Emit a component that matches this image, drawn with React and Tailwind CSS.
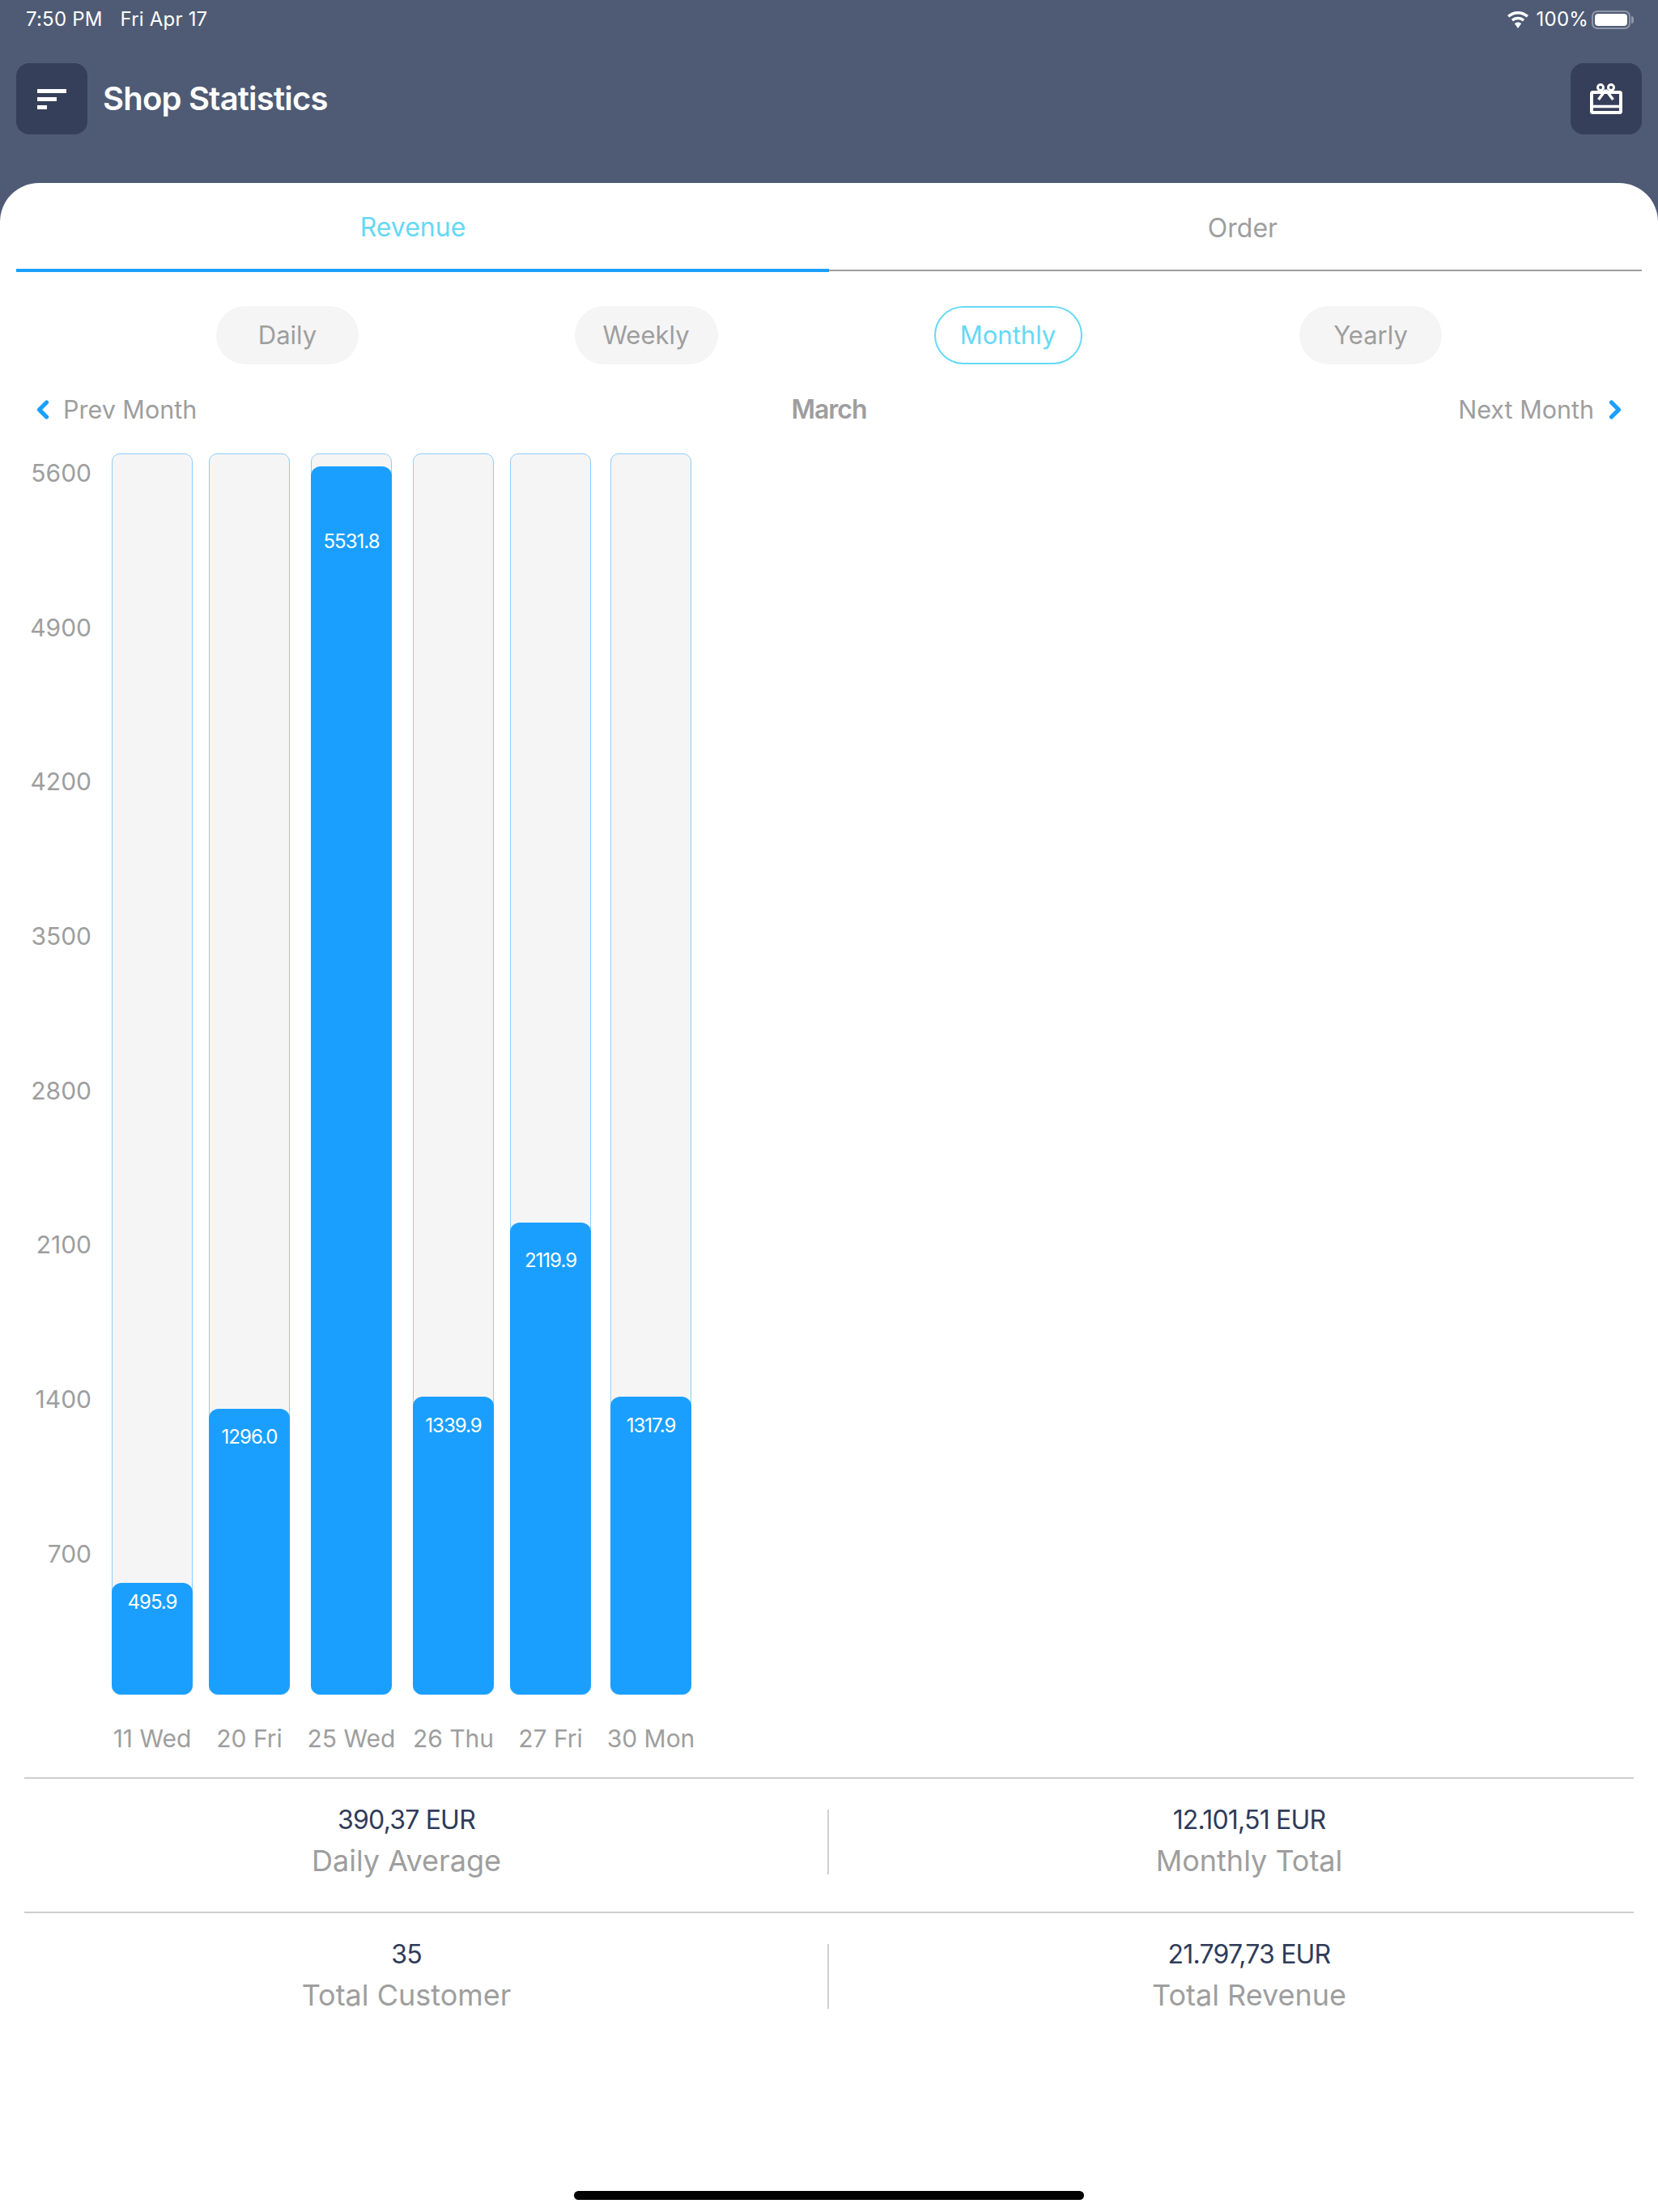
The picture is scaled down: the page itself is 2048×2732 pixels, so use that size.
import { ChevronLeft, ChevronRight } from 'lucide-react'

const PERIODS = [
  { label: 'Daily', width: 'w-[176px]', nudge: '' },
  { label: 'Weekly', width: 'w-[177px]', nudge: 'mr-[6px]' },
  { label: 'Monthly', width: 'w-[183px]', nudge: 'mr-[4px]', active: true },
  { label: 'Yearly', width: 'w-[176px]', nudge: '' },
]

const AXIS = ['5600', '4900', '4200', '3500', '2800', '2100', '1400', '700']

const BARS = [
  { day: '11 Wed', value: '495.9', height: 'h-[138px]', top: 'pt-[9px]', gap: '' },
  { day: '20 Fri', value: '1296.0', height: 'h-[353px]', top: 'pt-[20px]', gap: 'ml-[20px]' },
  { day: '25 Wed', value: '5531.8', height: 'h-[1517px]', top: 'pt-[78px]', gap: 'ml-[26px]' },
  { day: '26 Thu', value: '1339.9', height: 'h-[368px]', top: 'pt-[21px]', gap: 'ml-[26px]' },
  { day: '27 Fri', value: '2119.9', height: 'h-[583px]', top: 'pt-[32px]', gap: 'ml-[20px]' },
  { day: '30 Mon', value: '1317.9', height: 'h-[368px]', top: 'pt-[21px]', gap: 'ml-[24px]' },
]

const STATS = [
  [
    { value: '390,37 EUR', label: 'Daily Average' },
    { value: '12.101,51 EUR', label: 'Monthly Total' },
  ],
  [
    { value: '35', label: 'Total Customer' },
    { value: '21.797,73 EUR', label: 'Total Revenue' },
  ],
]

function GiftIcon() {
  return (
    <svg width="40" height="38" viewBox="0 0 40 38" fill="none" stroke="white">
      <rect x="2" y="11" width="36" height="25" rx="1.500" strokeWidth="4" />
      <path d="M2 28.500h36" strokeWidth="3.500" />
      <circle cx="13" cy="5" r="3.500" strokeWidth="3" />
      <circle cx="26" cy="5" r="3.500" strokeWidth="3" />
      <path d="M19.500 8l-9 12M19.500 8l9 12" strokeWidth="3.500" />
    </svg>
  )
}

function StatusBar() {
  return (
    <div className="flex h-[48px] shrink-0 items-center justify-between pl-[32px] pr-[30px] text-[24px] tracking-[0.2px] text-white">
      <div className="flex gap-[22px]">
        <span>7:50 PM</span>
        <span>Fri Apr 17</span>
      </div>
      <div className="flex items-center">
        <svg width="26" height="21" viewBox="0 0 26 21" fill="white" className="mr-[10px]">
          <path d="M13 0c5 0 9.500 1.900 13 5.100l-2.300 2.500C20.900 5 17.100 3.400 13 3.400S5.100 5 2.300 7.600L0 5.100C3.500 1.900 8 0 13 0z" />
          <path d="M13 6.800c3.100 0 5.900 1.200 8.100 3.100l-2.300 2.500c-1.500-1.400-3.600-2.200-5.800-2.200s-4.300.8-5.800 2.200l-2.300-2.500c2.200-1.900 5-3.100 8.100-3.100z" />
          <path d="M13 13.500c-1.600 0-3.100.6-4.200 1.600L13 21l4.200-5.900c-1.100-1-2.600-1.600-4.200-1.600z" />
        </svg>
        <span>100%</span>
        <div className="ml-[4px] flex items-center">
          <div className="flex h-[23px] w-[48px] rounded-[7px] border-2 border-[#8f97a8] p-[2px]">
            <div className="flex-1 rounded-[4px] bg-white" />
          </div>
          <div className="ml-[1px] h-[9px] w-[3px] rounded-r-full bg-[#8f97a8]" />
        </div>
      </div>
    </div>
  )
}

export default function App() {
  return (
    <div className="flex h-[2732px] w-[2048px] flex-col overflow-hidden bg-[#4f5b75] font-['Inter',sans-serif]">
      <StatusBar />
      <div className="mt-[30px] flex h-[88px] shrink-0 items-center justify-between px-[20px]">
        <div className="flex items-center gap-[19px]">
          <button className="flex h-[88px] w-[88px] flex-col items-start justify-center gap-[5px] rounded-[16px] bg-[#363f59] pl-[26px]">
            <span className="h-[5px] w-[36px] bg-white" />
            <span className="h-[5px] w-[24px] bg-white" />
            <span className="h-[5px] w-[12px] bg-white" />
          </button>
          <h1 className="text-[40px] font-semibold tracking-[-0.8px] text-white">Shop Statistics</h1>
        </div>
        <button className="flex h-[88px] w-[88px] items-center justify-center rounded-[16px] bg-[#363f59]">
          <GiftIcon />
        </button>
      </div>

      <div className="mt-[60px] flex-1 rounded-t-[48px] bg-white">
        <div className="flex px-[20px]">
          <div className="flex h-[110px] w-[1004px] items-center justify-center border-b-4 border-[#1a9fff] pr-[24px] pt-[4px] text-[32px] text-[#66d9f5]">Revenue</div>
          <div className="flex h-[109px] w-[1004px] items-center justify-center border-b-2 border-[#9e9e9e] pl-[18px] pt-[4px] text-[32px] text-[#9e9e9e]">Order</div>
        </div>

        <div className="mx-auto mt-[42px] grid w-[1784px] grid-cols-4">
          {PERIODS.map(p => (
            <div key={p.label} className="flex justify-center">
              <div className={`flex h-[72px] items-center justify-center rounded-full text-[31px] ${p.width} ${p.nudge} ${p.active ? 'border-2 border-[#66d9f5] text-[#66d9f5]' : 'bg-[#f5f5f5] text-[#9e9e9e]'}`}>
                {p.label}
              </div>
            </div>
          ))}
        </div>

        <div className="mt-[36px] flex h-[40px] items-center justify-between px-[35px] text-[30.5px] text-[#9e9e9e]">
          <div className="flex w-[400px] items-center gap-[7px]">
            <ChevronLeft size={36} strokeWidth={3.5} className="text-[#1a9fff]" />
            <span>Prev Month</span>
          </div>
          <span className="text-[32px] font-semibold tracking-[-1px]">March</span>
          <div className="flex w-[400px] items-center justify-end gap-[8px]">
            <span>Next Month</span>
            <ChevronRight size={36} strokeWidth={3.5} className="text-[#1a9fff]" />
          </div>
        </div>

        <div className="mt-[34px] flex">
          <div className="flex h-[1533px] w-[113px] flex-col items-end pt-[4px] text-[30px] leading-[40px] text-[#9e9e9e]">
            {AXIS.map(v => (
              <div key={v} className="h-[190.7px] shrink-0">{v}</div>
            ))}
          </div>
          <div className="ml-[25px] flex">
            {BARS.map(b => (
              <div key={b.day} className={`flex w-[100px] flex-col items-center ${b.gap}`}>
                <div className="flex h-[1533px] w-full flex-col justify-end rounded-[10px] border border-[#90cdf9] bg-[#f5f5f5]">
                  <div className={`-mx-px -mb-px rounded-[12px] bg-[#1a9fff] text-center text-[24px] leading-[30px] tracking-[-1px] text-white ${b.height} ${b.top}`}>
                    {b.value}
                  </div>
                </div>
                <div className="mt-[34px] whitespace-nowrap text-[30px] leading-[40px] text-[#9e9e9e]">{b.day}</div>
              </div>
            ))}
          </div>
        </div>

        <div className="mx-[30px] mt-[28px]">
          {STATS.map(row => (
            <div key={row[0].label} className="flex h-[166px] items-center border-t-2 border-[#cfcfcf] pb-[8px]">
              {row.map((s, i) => (
                <div key={s.label} className={`flex h-[80px] w-1/2 flex-col items-center justify-center pb-[4px] ${i === 0 ? 'border-r-2 border-[#cfcfcf] pr-[48px]' : 'pl-[44px]'}`}>
                  <div className="text-[32px] leading-[44px] tracking-[-0.8px] text-[#2f3b59]">{s.value}</div>
                  <div className="mt-[6px] text-[36px] leading-[44px] text-[#9e9e9e]">{s.label}</div>
                </div>
              ))}
            </div>
          ))}
        </div>

        <div className="mx-auto mt-[179px] h-[11px] w-[630px] rounded-full bg-black" />
      </div>
    </div>
  )
}
